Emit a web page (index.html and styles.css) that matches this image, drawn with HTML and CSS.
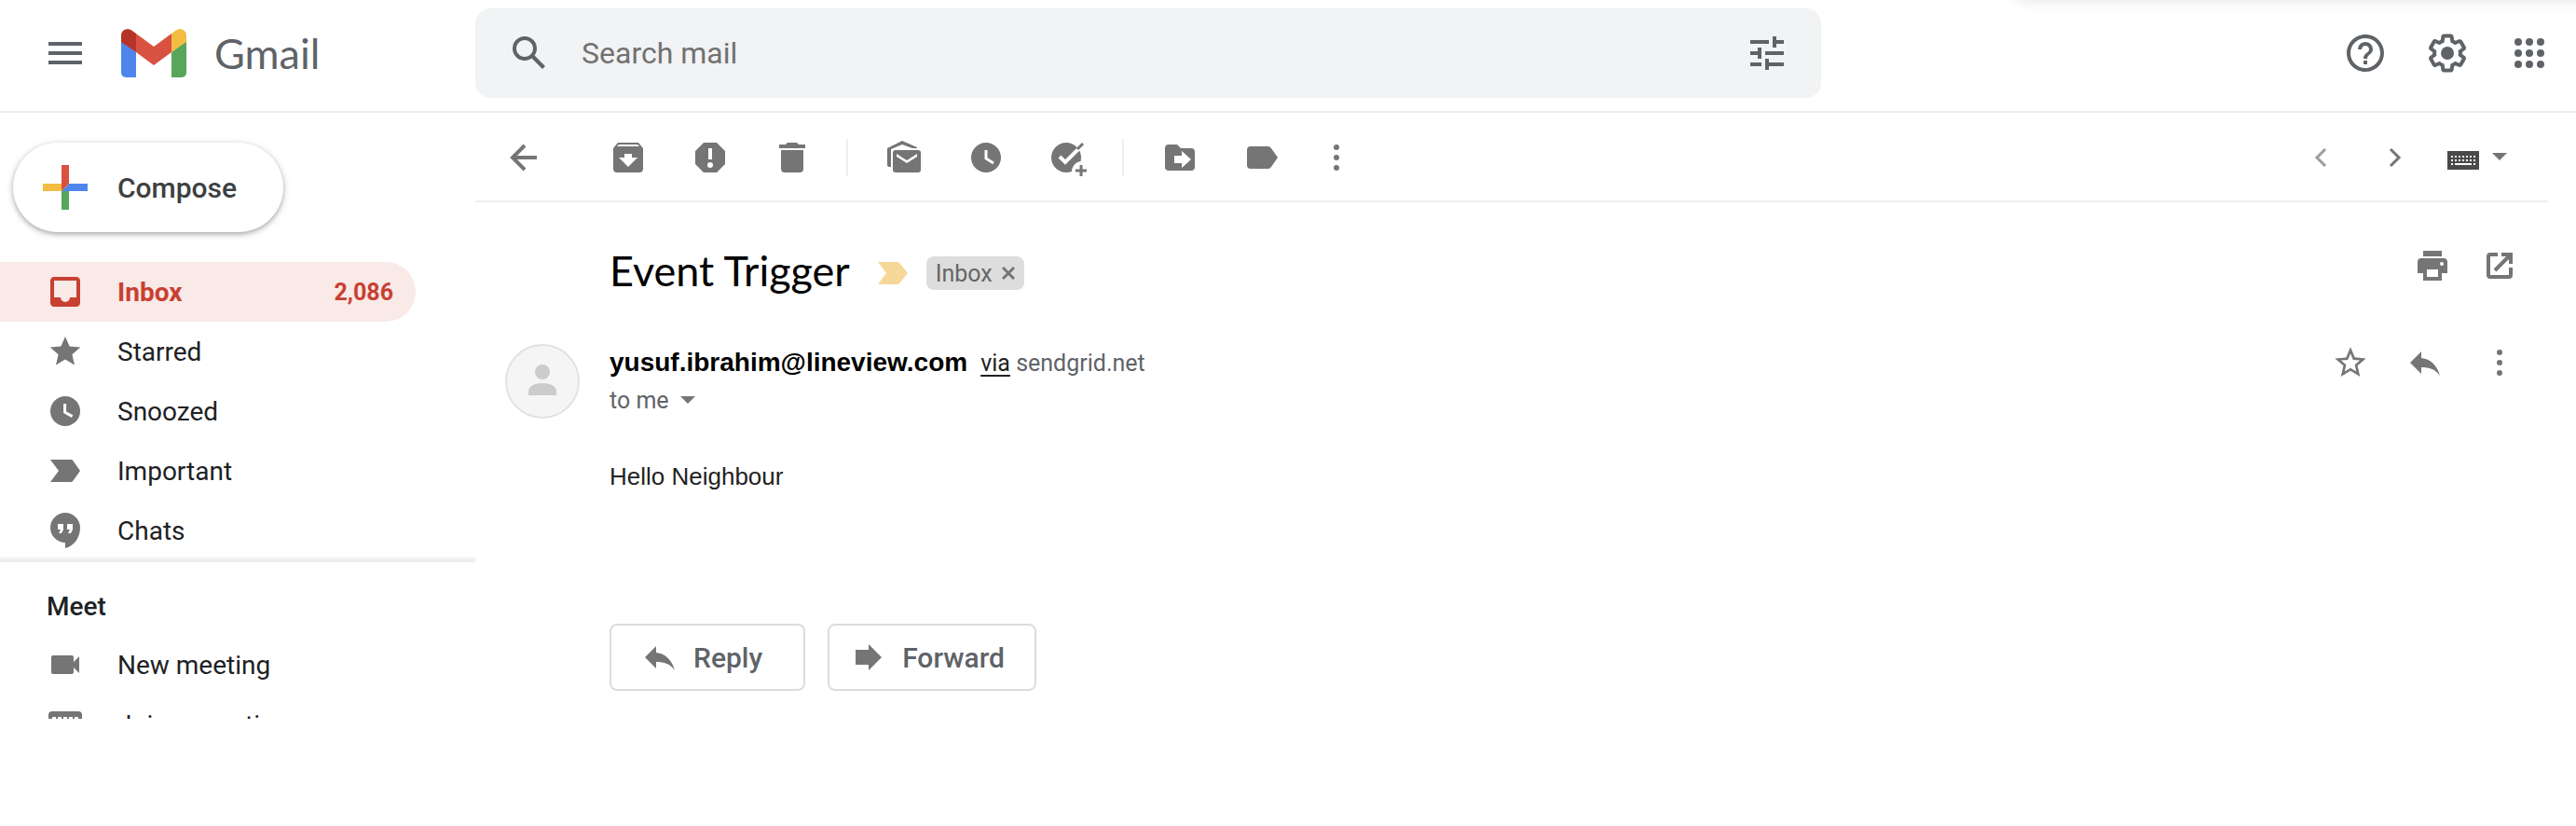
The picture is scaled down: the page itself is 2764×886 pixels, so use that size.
FILE: index.html
```html
<!DOCTYPE html>
<html lang="en">
<head>
<meta charset="utf-8">
<title>Gmail</title>
<link rel="stylesheet" href="styles.css">
</head>
<body>
<header class="header">
  <div class="brand">
    <button class="icon-btn" aria-label="Main menu"><svg class="i48" viewBox="0 0 24 24"><path d="M3 6h18v2H3zm0 5h18v2H3zm0 5h18v2H3z"/></svg></button>
    <a class="logo" href="#">
      <svg class="logo-mark" viewBox="0 0 70 52">
        <path fill="#4f86ec" d="M0 13 16 25V52H5a5 5 0 0 1-5-5z"/>
        <path fill="#58a55c" d="M70 13 54 25V52h11a5 5 0 0 0 5-5z"/>
        <path fill="#d95140" d="M16 5 35 19 54 5V25L35 39 16 25z"/>
        <path fill="#b63329" d="M0 14V7C0 1 7-2 12 2l4 3V25z"/>
        <path fill="#f2bd42" d="M70 14V7C70 1 63-2 58 2l-4 3V25z"/>
      </svg>
      <span>Gmail</span>
    </a>
  </div>
  <form class="search" role="search">
    <button class="icon-btn" type="button" aria-label="Search"><svg class="i48" viewBox="0 0 24 24"><path d="M20.49 19l-5.73-5.73C15.53 12.2 16 10.91 16 9.5A6.5 6.5 0 1 0 9.5 16c1.41 0 2.7-.47 3.77-1.24L19 20.49 20.49 19zM5 9.5C5 7.01 7.01 5 9.5 5S14 7.01 14 9.5 11.99 14 9.5 14 5 11.99 5 9.5z"/></svg></button>
    <input class="search-input" type="text" placeholder="Search mail" aria-label="Search mail">
    <button class="icon-btn" type="button" aria-label="Search options"><svg class="i48" viewBox="0 0 24 24"><path d="M3 17v2h6v-2H3zM3 5v2h10V5H3zm10 16v-2h8v-2h-8v-2h-2v6h2zM7 9v2H3v2h4v2h2V9H7zm14 4v-2H11v2h10zm-6-4h2V7h4V5h-4V3h-2v6z"/></svg></button>
  </form>
  <div class="header-tools">
    <button class="icon-btn" aria-label="Support"><svg class="i48" viewBox="0 0 24 24"><path d="M11 18h2v-2h-2v2zm1-16C6.48 2 2 6.48 2 12s4.48 10 10 10 10-4.48 10-10S17.52 2 12 2zm0 18c-4.41 0-8-3.59-8-8s3.59-8 8-8 8 3.59 8 8-3.59 8-8 8zm0-14c-2.21 0-4 1.79-4 4h2c0-1.1.9-2 2-2s2 .9 2 2c0 2-3 1.75-3 5h2c0-2.25 3-2.5 3-5 0-2.21-1.79-4-4-4z"/></svg></button>
    <button class="icon-btn" aria-label="Settings"><svg class="i48" viewBox="0 0 24 24"><path d="M13.85 22.25h-3.7c-.74 0-1.36-.54-1.45-1.27l-.27-1.89c-.27-.14-.53-.29-.79-.46l-1.8.72c-.7.26-1.47-.03-1.81-.65L2.2 15.53c-.35-.66-.2-1.44.36-1.88l1.53-1.19c-.01-.15-.02-.3-.02-.46 0-.15.01-.31.02-.46l-1.52-1.19c-.59-.45-.74-1.26-.37-1.88l1.85-3.19c.34-.62 1.11-.9 1.79-.63l1.81.73c.26-.17.52-.32.78-.46l.27-1.91c.09-.7.71-1.25 1.44-1.25h3.7c.74 0 1.36.54 1.45 1.27l.27 1.89c.27.14.53.29.79.46l1.8-.72c.71-.26 1.48.03 1.82.65l1.84 3.18c.36.66.2 1.44-.36 1.88l-1.52 1.19c.01.15.02.3.02.46s-.01.31-.02.46l1.52 1.19c.56.45.72 1.23.37 1.86l-1.86 3.22c-.34.62-1.11.9-1.8.63l-1.8-.72c-.26.17-.52.32-.78.46l-.27 1.91c-.1.68-.72 1.22-1.46 1.22zm-3.23-2h2.76l.37-2.55.53-.22c.44-.18.88-.44 1.34-.78l.45-.34 2.38.96 1.38-2.4-2.03-1.58.07-.56c.03-.26.06-.51.06-.78s-.03-.53-.06-.78l-.07-.56 2.03-1.58-1.39-2.4-2.39.96-.45-.35c-.42-.32-.87-.58-1.33-.77l-.52-.22-.37-2.55h-2.76l-.37 2.55-.53.21c-.44.19-.88.44-1.34.79l-.45.33-2.38-.95-1.39 2.39 2.03 1.58-.07.56a7 7 0 0 0-.06.79c0 .26.02.53.06.78l.07.56-2.03 1.58 1.38 2.4 2.39-.96.45.35c.43.33.86.58 1.33.77l.53.22.38 2.55z"/><circle cx="12" cy="12" r="3.5"/></svg></button>
    <button class="icon-btn" aria-label="Google apps"><svg class="i48" viewBox="0 0 24 24"><circle cx="6" cy="6" r="2"/><circle cx="12" cy="6" r="2"/><circle cx="18" cy="6" r="2"/><circle cx="6" cy="12" r="2"/><circle cx="12" cy="12" r="2"/><circle cx="18" cy="12" r="2"/><circle cx="6" cy="18" r="2"/><circle cx="12" cy="18" r="2"/><circle cx="18" cy="18" r="2"/></svg></button>
  </div>
  <div class="sheet-edge"><div class="sheet"></div></div>
</header>

<div class="body">
  <aside class="sidebar">
    <button class="compose"><svg class="i48" viewBox="0 0 48 48"><path fill="#f2bd42" d="M0 20h20v8H0z"/><path fill="#58a55c" d="M20 28h8v20h-8z"/><path fill="#4f86ec" d="M28 20h20v8H20z"/><path fill="#d95140" d="M20 0h8v20l-8 8z"/></svg>Compose</button>
    <nav class="nav" aria-label="Mail folders">
      <a class="item active" href="#"><svg class="i32" viewBox="2 2 16 16"><path d="M16 2H4C2.900 2 2 2.900 2 4v12c0 1.100.9 2 2 2h12c1.100 0 2-.9 2-2V4c0-1.100-.9-2-2-2zM4 4h12v9h-3.500a2.500 2.500 0 0 1-5 0H4z" fill-rule="evenodd"/></svg><span class="label">Inbox</span><span class="count">2,086</span></a>
      <a class="item" href="#"><svg class="i32" viewBox="2 2 16 16"><path d="M10 2l2.300 5.300 5.800.5-4.400 3.800 1.300 5.700L10 14.300l-5 3 1.300-5.700L1.900 7.800l5.800-.5z"/></svg><span class="label">Starred</span></a>
      <a class="item" href="#"><svg class="i32" viewBox="2 2 16 16"><circle cx="10" cy="10" r="8"/><path class="cut" d="M9.800 6v4.600l4 2.200" stroke-width="1.500"/></svg><span class="label">Snoozed</span></a>
      <a class="item" href="#"><svg class="i32" viewBox="2 2 16 16"><path d="M2 4h11c.5 0 .9.200 1.200.6L18 10l-3.800 5.400c-.3.400-.7.600-1.200.6H2l4.500-6z"/></svg><span class="label">Important</span></a>
      <a class="item" href="#"><svg class="chat" viewBox="0 0 32 38"><path d="M16 0a16 16 0 0 0 0 32v6c9-2 16-11 16-22A16 16 0 0 0 16 0z"/><path fill="#fff" d="M8 12h6v6l-2 4H9l2-4H8zM18 12h6v6l-2 4h-3l2-4h-3z"/></svg><span class="label">Chats</span></a>
    </nav>
    <section class="meet">
      <h2 class="meet-title">Meet</h2>
      <a class="item" href="#"><svg class="i32" viewBox="0 0 32 32"><path d="M3 6h20a2 2 0 0 1 2 2v5l6-6v18l-6-6v5a2 2 0 0 1-2 2H3a2 2 0 0 1-2-2V8a2 2 0 0 1 2-2z"/></svg><span class="label">New meeting</span></a>
      <a class="item" href="#"><svg class="kbd" viewBox="0 0 36 28"><path d="M4 0h28a4 4 0 0 1 4 4v20a4 4 0 0 1-4 4H4a4 4 0 0 1-4-4V4a4 4 0 0 1 4-4z"/><path fill="#fff" d="M4 6h4v4H4zM10 6h4v4h-4zM16 6h4v4h-4zM22 6h4v4h-4zM28 6h4v4h-4z"/></svg><span class="label">Join a meeting</span></a>
    </section>
  </aside>

  <main class="main">
    <div class="toolbar">
      <button class="icon-btn back" aria-label="Back to Inbox"><svg class="i40" viewBox="0 0 40 40"><path class="line" d="M34 20H9M21 7 8 20l13 13" stroke-width="4"/></svg></button>
      <div class="group">
        <button class="icon-btn" aria-label="Archive"><svg class="i40" viewBox="0 0 40 40"><path fill-rule="evenodd" d="M9 4h22l5 6v22a4 4 0 0 1-4 4H8a4 4 0 0 1-4-4V10zm1 2-2 2h24l-2-2zM16 16v4h-6l10 10 10-10h-6v-4z"/></svg></button>
        <button class="icon-btn" aria-label="Report spam"><svg class="i40" viewBox="0 0 40 40"><path fill-rule="evenodd" d="M13 4h14l9 9v14l-9 9H13l-9-9V13zM18 10v12h4V10zM20 25a3 3 0 1 0 0 6 3 3 0 0 0 0-6z"/></svg></button>
        <button class="icon-btn" aria-label="Delete"><svg class="i40" viewBox="0 0 40 40"><path d="M6 6h7l2-2h10l2 2h7v4H6zM8 12h24v20a4 4 0 0 1-4 4H12a4 4 0 0 1-4-4z"/></svg></button>
      </div>
      <div class="group ruled">
        <button class="icon-btn" aria-label="Mark as unread"><svg class="i40" viewBox="0 0 40 40"><path fill-rule="evenodd" d="M2 10 18 2l16 7v1h-5L18 6 6 11v19H4a2 2 0 0 1-2-2zM11 12h24a3 3 0 0 1 3 3v18a3 3 0 0 1-3 3H11a3 3 0 0 1-3-3V15a3 3 0 0 1 3-3zm1 4v3l11 7 11-7v-3l-11 7z"/></svg></button>
        <button class="icon-btn" aria-label="Snooze"><svg class="i40" viewBox="0 0 40 40"><circle cx="20" cy="20" r="16"/><path class="cut" d="M20 12v9l8 5" stroke-width="3"/></svg></button>
        <button class="icon-btn" aria-label="Add to Tasks"><svg class="i40" viewBox="0 0 40 40"><circle cx="18" cy="20" r="16"/><circle cx="35" cy="35" r="11" fill="#fff"/><path class="cut" d="M11 19l6 6L33 9" stroke-width="4"/><path class="line" d="M30 11l6-6M28 34h12M34 28v12" stroke-width="3"/></svg></button>
      </div>
      <div class="group ruled">
        <button class="icon-btn" aria-label="Move to"><svg class="i40" viewBox="0 0 40 40"><path fill-rule="evenodd" d="M8 6h9l4 4h11a4 4 0 0 1 4 4v16a4 4 0 0 1-4 4H8a4 4 0 0 1-4-4V10a4 4 0 0 1 4-4zm6 12v8h8v5l10-9-10-9v5z"/></svg></button>
        <button class="icon-btn" aria-label="Labels"><svg class="i40" viewBox="0 0 40 40"><path d="M8 8h19c1 0 2 1 3 2l7 10-7 10c-1 1-2 2-3 2H8a4 4 0 0 1-4-4V12a4 4 0 0 1 4-4z"/></svg></button>
      </div>
      <button class="icon-btn overflow" aria-label="More"><svg class="i40" viewBox="0 0 40 40"><circle cx="20" cy="9" r="3"/><circle cx="20" cy="20" r="3"/><circle cx="20" cy="31" r="3"/></svg></button>
      <div class="pager">
        <button class="icon-btn" aria-label="Newer" disabled><svg class="i40" viewBox="0 0 40 40"><path class="line" d="M25 11l-9 9 9 9" stroke-width="3"/></svg></button>
        <button class="icon-btn" aria-label="Older"><svg class="i40" viewBox="0 0 40 40"><path class="line" d="M15 11l9 9-9 9" stroke-width="3"/></svg></button>
        <button class="icon-btn input-tool" aria-label="Select input tool"><svg class="keys" viewBox="0 0 34 20"><path fill="#4a4a4a" d="M0 0h34v20H0z"/><path class="cut" stroke-dasharray="2 2" stroke-width="2" d="M4 6h27M4 10h27M4 14h3M28 14h3"/><path class="cut" stroke-width="2" d="M8 14h18"/></svg><svg class="caret" viewBox="0 0 16 8"><path d="M0 0h16l-8 8z"/></svg></button>
      </div>
    </div>

    <article class="mail">
      <div class="subject-row">
        <h1 class="subject">Event Trigger</h1>
        <svg class="marker" viewBox="0 0 32 24"><path d="M0 0h21c1 0 2 1 2 1l9 11-9 11s-1 1-2 1H0l9-12z"/></svg>
        <span class="chip">Inbox<button class="chip-x" aria-label="Remove label Inbox"><svg viewBox="0 0 14 14"><path class="line" d="M1 1l12 12M13 1 1 13" stroke-width="3"/></svg></button></span>
        <div class="actions">
          <button class="icon-btn" aria-label="Print"><svg class="i40" viewBox="0 0 40 40"><path fill-rule="evenodd" d="M10 4h20v6H10zM8 12h24a4 4 0 0 1 4 4v12h-6v8H10v-8H4V16a4 4 0 0 1 4-4zm6 12v8h12v-8zM30 16a2 2 0 1 0 0 4 2 2 0 0 0 0-4z"/></svg></button>
          <button class="icon-btn" aria-label="Open in new window"><svg class="i40" viewBox="0 0 40 40"><path class="line" d="M18 8H10a2 2 0 0 0-2 2v20a2 2 0 0 0 2 2h20a2 2 0 0 0 2-2v-8M22 8h10v10M32 8 15 25" stroke-width="4"/></svg></button>
        </div>
      </div>

      <div class="sender-row">
        <svg class="avatar" viewBox="0 0 80 80"><circle cx="40" cy="40" r="39" fill="#f5f5f5" stroke="#e2e2e2" stroke-width="2"/><circle cx="40" cy="30" r="8" fill="#ccc"/><path fill="#ccc" d="M25 55v-4c0-6 7-9 15-9s15 3 15 9v4z"/></svg>
        <div class="who">
          <div class="from"><strong>yusuf.ibrahim@lineview.com</strong><span class="via"><a href="#">via</a> sendgrid.net</span></div>
          <div class="to">to me <button class="icon-btn" aria-label="Show details"><svg class="caret" viewBox="0 0 16 8"><path d="M0 0h16l-8 8z"/></svg></button></div>
        </div>
        <div class="actions">
          <button class="icon-btn" aria-label="Star"><svg class="i40" viewBox="0 0 24 24"><path d="M22 9.240l-7.190-.62L12 2 9.190 8.630 2 9.240l5.460 4.730L5.820 21 12 17.270 18.180 21l-1.630-7.030L22 9.240zM12 15.400l-3.760 2.270 1-4.280-3.320-2.880 4.380-.38L12 6.100l1.710 4.040 4.380.38-3.320 2.880 1 4.280L12 15.400z"/></svg></button>
          <button class="icon-btn" aria-label="Reply"><svg class="i40" viewBox="0 0 40 40"><path d="M16 15V8L4 20l12 12v-7c9 0 15 2 20 9-3-11-10-18-20-19z"/></svg></button>
          <button class="icon-btn" aria-label="More"><svg class="i40" viewBox="0 0 40 40"><circle cx="20" cy="9" r="3"/><circle cx="20" cy="20" r="3"/><circle cx="20" cy="31" r="3"/></svg></button>
        </div>
      </div>

      <p class="message">Hello Neighbour</p>

      <div class="replies">
        <button class="reply"><svg class="i40" viewBox="0 0 40 40"><path d="M16 15V8L4 20l12 12v-7c9 0 15 2 20 9-3-11-10-18-20-19z"/></svg>Reply</button>
        <button class="reply forward"><svg class="i40" viewBox="0 0 40 40"><path d="M6 12h14V6l14 14-14 14v-6H6z"/></svg>Forward</button>
      </div>
    </article>
  </main>
</div>
</body>
</html>
```
FILE: styles.css
```css
* { box-sizing: border-box; }

body {
  margin: 0;
  background: #fff;
  color: #202124;
  font-family: Roboto, "Liberation Sans", sans-serif;
  font-size: 28px;
}

button, input { font: inherit; color: inherit; }
a { color: inherit; text-decoration: none; }
svg { display: block; flex: none; fill: #757575; }

.line { fill: none; stroke: #757575; }
.cut { fill: none; stroke: #fff; }

.i32 { width: 32px; height: 32px; }
.i40 { width: 40px; height: 40px; }
.i48 { width: 48px; height: 48px; }

.icon-btn {
  display: flex;
  align-items: center;
  padding: 0;
  border: 0;
  background: none;
}
.icon-btn:disabled { opacity: .7; }

/* Header */
.header {
  position: relative;
  display: flex;
  align-items: center;
  padding: 9px 26px 14px 0;
  border-bottom: 2px solid #eee;
}
.header svg { fill: #5f6368; }
.brand {
  display: flex;
  align-items: center;
  gap: 36px;
  width: 510px;
  padding-left: 46px;
}
.logo {
  display: flex;
  align-items: center;
  gap: 30px;
  color: #5f6368;
  font-family: Lato, sans-serif;
  font-size: 45px;
}
.logo-mark { width: 70px; height: 52px; }
.search {
  display: flex;
  align-items: center;
  gap: 32px;
  flex: 0 1 1444px;
  height: 96px;
  padding: 0 34px;
  border-radius: 16px;
  background: #f1f3f4;
}
.search-input {
  flex: 1;
  min-width: 0;
  padding: 0;
  border: 0;
  outline: 0;
  background: none;
  font-size: 32px;
}
.search-input::placeholder { color: #717171; opacity: 1; }
.header-tools { display: flex; gap: 40px; margin-left: auto; }

.sheet-edge {
  position: absolute;
  top: 0;
  right: 0;
  width: 624px;
  height: 16px;
  overflow: hidden;
}
.sheet {
  height: 16px;
  margin: -16px -20px 0 24px;
  border-radius: 16px;
  box-shadow: 0 0 16px rgba(0, 0, 0, .12);
}

/* Layout */
.body { display: flex; align-items: flex-start; }
.sidebar {
  width: 510px;
  height: 650px;
  overflow: hidden;
  flex: none;
}
.main { flex: 1; min-width: 0; padding-right: 30px; }

/* Sidebar */
.compose {
  display: flex;
  align-items: center;
  gap: 32px;
  height: 96px;
  margin: 32px 0 32px 14px;
  padding: 0 50px 0 32px;
  border: 0;
  border-radius: 48px;
  background: #fff;
  box-shadow: 0 2px 4px rgba(60, 64, 67, .3), 0 2px 6px 2px rgba(60, 64, 67, .15);
  color: #3c4043;
  font-size: 30px;
  font-weight: 500;
}
.nav {
  height: 322px;
  overflow: hidden;
  border-bottom: 3px solid #eee;
  box-shadow: inset 0 -3px 3px -1px rgba(0, 0, 0, .06);
}
.item {
  display: flex;
  align-items: center;
  height: 64px;
  margin-right: 64px;
  padding: 0 24px 0 54px;
}
.label { flex: 1; margin-left: 40px; }
.chat { width: 32px; height: 38px; }
.kbd { width: 36px; height: 28px; margin: 0 -2px; }
.active {
  border-radius: 0 32px 32px 0;
  background: #f9e9e7;
  color: #c84031;
  font-weight: 700;
}
.active svg { fill: #c84031; }
.count { font-size: 25px; }
.meet-title {
  margin: 0;
  padding: 32px 0 14px 50px;
  font-size: 28px;
  font-weight: 500;
  line-height: 32px;
}

/* Toolbar */
.toolbar {
  display: flex;
  align-items: center;
  height: 96px;
  padding: 2px 44px 0 32px;
  border-bottom: 2px solid #eee;
}
.back { margin-right: 72px; }
.group { display: flex; align-items: center; gap: 48px; height: 40px; }
.ruled {
  margin-left: 38px;
  padding-left: 40px;
  border-left: 2px solid #eee;
}
.overflow { margin-left: 40px; }
.pager { display: flex; align-items: center; gap: 40px; margin-left: auto; }
.input-tool { align-items: flex-start; gap: 14px; margin-left: -4px; padding-top: 6px; }
.input-tool .caret { margin-top: 2px; }
.keys { width: 34px; height: 20px; }
.caret { width: 16px; height: 8px; }

/* Message */
.mail { padding: 40px 32px 0; }
.subject-row { display: flex; align-items: center; margin-left: 112px; }
.subject {
  margin: 0;
  padding-bottom: 6px;
  color: #000;
  font-family: Lato, sans-serif;
  font-size: 45px;
  font-weight: 400;
  line-height: 66px;
}
.marker { width: 32px; height: 24px; margin: 0 20px 0 30px; fill: #f5d797; }
.chip {
  display: flex;
  align-items: center;
  gap: 10px;
  height: 36px;
  padding: 0 10px;
  border-radius: 8px;
  background: #ddd;
  color: #666;
  font-size: 25px;
}
.chip-x { padding: 0; border: 0; background: none; }
.chip-x svg { width: 14px; height: 14px; }
.actions { display: flex; margin-left: auto; }
.subject-row .actions { gap: 32px; align-self: flex-start; padding-top: 8px; }

.sender-row { display: flex; padding-top: 40px; }
.avatar { width: 80px; height: 80px; }
.who { margin-left: 32px; }
.from {
  display: flex;
  align-items: baseline;
  gap: 14px;
  height: 40px;
  line-height: 40px;
}
.from strong {
  color: #000;
  font-family: "Liberation Sans", sans-serif;
  font-size: 28px;
}
.via, .to { color: #5f6368; font-size: 25px; }
.via a { color: #222; text-decoration: underline; text-underline-offset: 4px; }
.to { display: flex; align-items: center; gap: 12px; height: 40px; }
.sender-row .actions { gap: 40px; align-self: flex-start; }

.message {
  margin: 46px 0 0 112px;
  color: #222;
  font-family: "Liberation Sans", sans-serif;
  font-size: 26px;
  line-height: 32px;
}
.replies { display: flex; gap: 24px; margin: 142px 0 0 112px; }
.reply {
  display: flex;
  align-items: center;
  gap: 16px;
  height: 72px;
  padding: 0 44px 0 32px;
  border: 2px solid #dadce0;
  border-radius: 8px;
  background: #fff;
  color: #5f6368;
  font-size: 30px;
  font-weight: 500;
}
.forward { padding: 0 32px 0 22px; }
```
